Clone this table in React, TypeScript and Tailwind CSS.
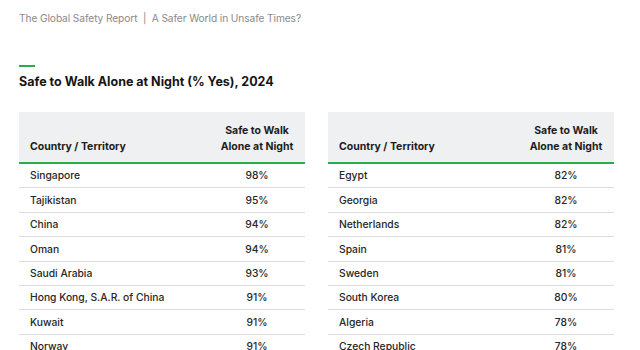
const left: [string, string][] = [
  ['Singapore', '98%'],
  ['Tajikistan', '95%'],
  ['China', '94%'],
  ['Oman', '94%'],
  ['Saudi Arabia', '93%'],
  ['Hong Kong, S.A.R. of China', '91%'],
  ['Kuwait', '91%'],
  ['Norway', '91%'],
]

const right: [string, string][] = [
  ['Egypt', '82%'],
  ['Georgia', '82%'],
  ['Netherlands', '82%'],
  ['Spain', '81%'],
  ['Sweden', '81%'],
  ['South Korea', '80%'],
  ['Algeria', '78%'],
  ['Czech Republic', '78%'],
]

function SafetyTable({ rows }: { rows: [string, string][] }) {
  return (
    <div className="w-[286px] shrink-0">
      <div className="h-[52px] bg-[#eef0f1] border-b-2 border-[#2bab4b] flex items-end pb-[7px] text-[10.5px] font-bold text-[#1d1d1d] leading-4">
        <div className="flex-1 pl-[11px]">Country / Territory</div>
        <div className="w-[96px] text-center">
          Safe to Walk
          <br />
          Alone at Night
        </div>
      </div>
      {rows.map(([country, pct]) => (
        <div
          key={country}
          className="h-[24.4px] border-b border-[#dcdcdc] flex items-center pt-px text-[10.3px] font-medium text-[#262626]"
        >
          <div className="flex-1 pl-[11px]">{country}</div>
          <div className="w-[96px] text-center">{pct}</div>
        </div>
      ))}
    </div>
  )
}

export default function App() {
  return (
    <div className="w-[640px] h-[350px] overflow-hidden bg-white pl-[19px] pt-[10px] font-['Inter',sans-serif]">
      <p className="text-[10.2px] leading-4 text-[#8a8a8a] tracking-[-0.1px]">
        The Global Safety Report&nbsp; |&nbsp; A Safer World in Unsafe Times?
      </p>
      <div className="mt-[39px] w-4 h-[2px] bg-[#2bab4b]" />
      <h1 className="mt-[7px] text-[12.5px] leading-4 font-bold text-[#151515]">
        Safe to Walk Alone at Night (% Yes), 2024
      </h1>
      <div className="mt-[22px] flex gap-[23px]">
        <SafetyTable rows={left} />
        <SafetyTable rows={right} />
      </div>
    </div>
  )
}
